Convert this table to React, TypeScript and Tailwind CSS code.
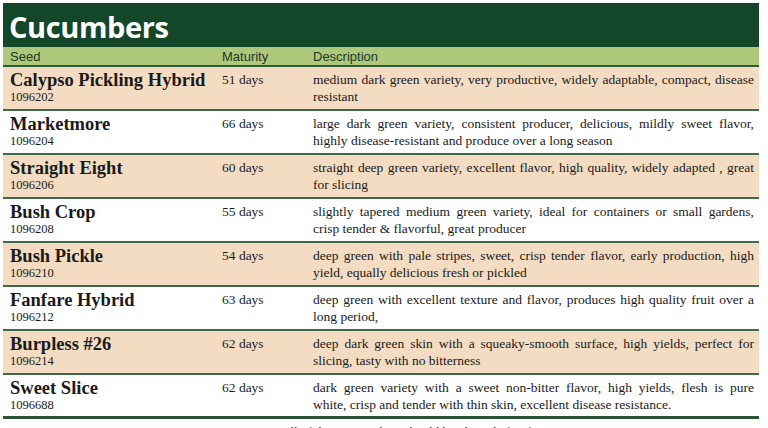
import React from "react";

type Row = { name: string; id: string; days: string; desc: string; lines?: [string, string] };

const rows: Row[] = [
  { name: "Calypso Pickling Hybrid", id: "1096202", days: "51 days", desc: "medium dark green variety, very productive, widely adaptable, compact, disease resistant" },
  { name: "Marketmore", id: "1096204", days: "66 days", desc: "large dark green variety, consistent producer, delicious, mildly sweet flavor, highly disease-resistant and produce over a long season" },
  { name: "Straight Eight", id: "1096206", days: "60 days", desc: "straight deep green variety, excellent flavor, high quality, widely adapted , great for slicing" },
  { name: "Bush Crop", id: "1096208", days: "55 days", desc: "slightly tapered medium green variety, ideal for containers or small gardens, crisp tender & flavorful, great producer" },
  { name: "Bush Pickle", id: "1096210", days: "54 days", desc: "deep green with pale stripes, sweet, crisp tender flavor, early production, high yield, equally delicious fresh or pickled" },
  { name: "Fanfare Hybrid", id: "1096212", days: "63 days", desc: "deep green with excellent texture and flavor, produces high quality fruit over a long period," },
  { name: "Burpless #26", id: "1096214", days: "62 days", desc: "deep dark green skin with a squeaky-smooth surface, high yields, perfect for slicing, tasty with no bitterness" },
  {
    name: "Sweet Slice",
    id: "1096688",
    days: "62 days",
    desc: "",
    lines: [
      "dark green variety with a sweet non-bitter flavor, high yields, flesh is pure",
      "white, crisp and tender with thin skin, excellent disease resistance.",
    ],
  },
];

const serif = { fontFamily: '"Liberation Serif", "Times New Roman", serif' };

export default function App() {
  return (
    <div className="w-[768px] h-[428px] overflow-hidden bg-white pt-[3px] pl-[3px]">
      <div className="w-[756px]">
        <div className="h-[44px] bg-[#14472a] flex items-center pl-[6px] pt-[3px]">
          <span className="text-white text-[29px] font-bold leading-[36px] tracking-[-0.4px]" style={{ fontFamily: '"Open Sans", "Noto Sans", sans-serif' }}>
            Cucumbers
          </span>
        </div>
        <div
          className="h-[20px] bg-[#adc77b] border-b-2 border-[#2f5a3a] flex items-center text-[13px] text-[#1e3a22] leading-none"
          style={{ fontFamily: '"Liberation Sans", Arial, sans-serif' }}
        >
          <span className="w-[219px] pl-[7px]">Seed</span>
          <span className="w-[91px]">Maturity</span>
          <span>Description</span>
        </div>
        {rows.map((r, i) => (
          <div
            key={r.id}
            className={`h-[44px] flex text-[#1a1a1a] ${i % 2 === 0 ? "bg-[#f3dcc2]" : "bg-white"} ${i === rows.length - 1 ? "border-b-[3px] border-[#2a5535]" : "border-b-2 border-[#3d6b4a]"}`}
            style={serif}
          >
            <div className="w-[219px] pl-[7px] pt-[2px]">
              <div className="text-[18.5px] font-bold leading-[22px]">{r.name}</div>
              <div className="text-[12.5px] leading-[13px]">{r.id}</div>
            </div>
            <div className="w-[91px] text-[13.5px] pt-[4px] leading-[17px]">{r.days}</div>
            <div className="w-[441px] text-[13.5px] pt-[4px] leading-[17px] text-justify">
              {r.lines ? (
                <>
                  <span className="block [text-align-last:justify]">{r.lines[0]}</span>
                  <span className="block">{r.lines[1]}</span>
                </>
              ) : (
                r.desc
              )}
            </div>
          </div>
        ))}
        <div className="pt-[3px] pl-[278px] text-[13px] text-[#333]" style={serif}>
          All of these cucumbers should be planted after frost
        </div>
      </div>
    </div>
  );
}
